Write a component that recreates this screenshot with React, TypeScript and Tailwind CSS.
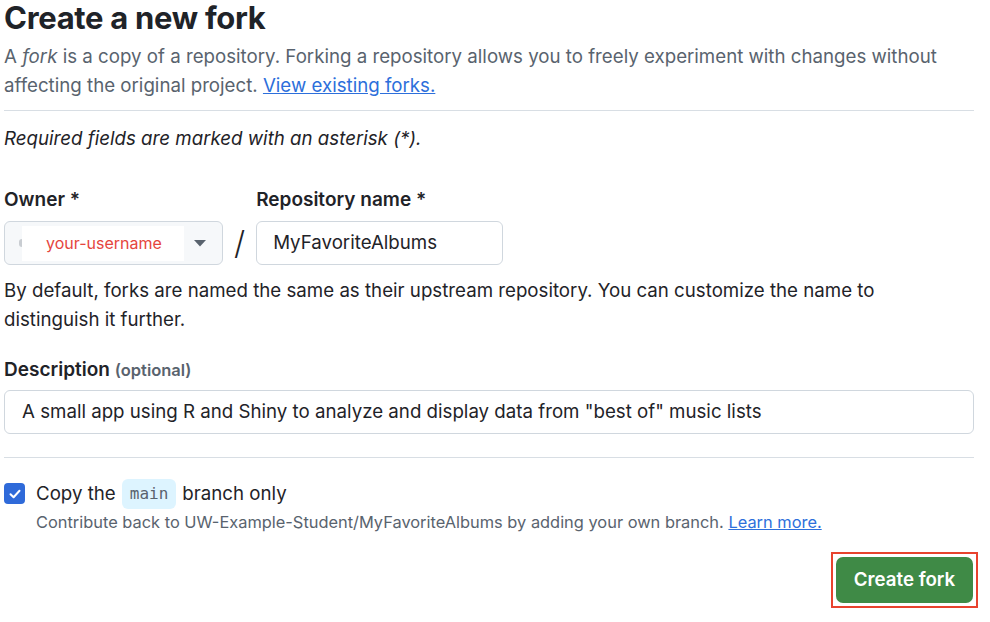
import React from "react";

export default function App() {
  return (
    <div
      className="w-[990px] h-[622px] bg-white pl-[4px] pr-[16px] overflow-hidden text-[#1f2328]"
      style={{ fontFamily: 'Inter, "Liberation Sans", Arial, sans-serif' }}
    >
      <h1 className="text-[31px] leading-[36px] font-bold tracking-[-0.3px]">Create a new fork</h1>
      <p className="mt-[6px] text-[18.7px] leading-[29px] text-[#59636e]">
        A <em>fork</em> is a copy of a repository. Forking a repository allows you to freely experiment with changes without
        <br />
        affecting the original project.{" "}
        <a href="#" className="text-[#2d6fdb] underline">View existing forks.</a>
      </p>
      <div className="mt-[10px] border-t border-[#d8dee4]" />
      <p className="mt-[13px] text-[18.7px] leading-[29px] italic">Required fields are marked with an asterisk (*).</p>

      <div className="mt-[35px] flex items-end">
        <div className="flex flex-col">
          <label className="text-[19px] leading-[24px] font-semibold">Owner *</label>
          <div className="mt-[9px] w-[219px] h-[44px] rounded-[6px] border border-[#d0d7de] bg-[#f6f8fa] flex items-center relative">
            <div className="ml-[14px] w-[3px] h-[8px] rounded-l-full bg-[#c9cdd2]" />
            <div className="w-[162px] h-[35px] bg-white flex items-center">
              <span className="ml-[24px] text-[16px] text-[#e5453d]">your-username</span>
            </div>
            <svg className="ml-[10px]" width="12" height="7" viewBox="0 0 12 7">
              <path d="M0 0 L12 0 L6 6.5 Z" fill="#59636e" />
            </svg>
          </div>
        </div>
        <span className="mx-[11px] mb-[4px] text-[32px] leading-[36px] font-light text-[#1f2328]">/</span>
        <div className="flex flex-col">
          <label className="text-[19px] leading-[24px] font-semibold">Repository name *</label>
          <div className="mt-[9px] w-[247px] h-[44px] rounded-[6px] border border-[#d0d7de] bg-white flex items-center">
            <span className="ml-[16px] text-[18.7px]">MyFavoriteAlbums</span>
          </div>
        </div>
      </div>

      <p className="mt-[11px] text-[18.7px] leading-[29px]">
        By default, forks are named the same as their upstream repository. You can customize the name to
        <br />
        distinguish it further.
      </p>

      <label className="block mt-[24px] text-[19px] leading-[24px] font-semibold">
        Description <span className="text-[16.5px] text-[#59636e]">(optional)</span>
      </label>
      <div className="mt-[8px] h-[44px] rounded-[6px] border border-[#d0d7de] bg-white flex items-center">
        <span className="ml-[17px] text-[18.7px]">
          A small app using R and Shiny to analyze and display data from "best of" music lists
        </span>
      </div>

      <div className="mt-[23px] border-t border-[#d8dee4]" />

      <div className="mt-[21px] flex items-center h-[29px]">
        <div className="w-[21px] h-[21px] rounded-[4px] bg-[#2f6ad9] flex items-center justify-center">
          <svg width="14" height="14" viewBox="0 0 14 14">
            <path d="M2.5 7.2 L5.6 10.2 L11.5 3.8" fill="none" stroke="white" strokeWidth="2" strokeLinecap="round" strokeLinejoin="round" />
          </svg>
        </div>
        <span className="ml-[11px] text-[18.7px] leading-[29px]">Copy the</span>
        <span
          className="ml-[6px] h-[30px] px-[8px] rounded-[6px] bg-[#ddf4ff] text-[#59636e] text-[16px] flex items-center"
          style={{ fontFamily: '"DejaVu Sans Mono", "Liberation Mono", monospace' }}
        >
          main
        </span>
        <span className="ml-[6px] text-[18.7px] leading-[29px]">branch only</span>
      </div>
      <p className="mt-[2px] ml-[32px] text-[16.4px] leading-[24px] text-[#59636e]">
        Contribute back to UW-Example-Student/MyFavoriteAlbums by adding your own branch.{" "}
        <a href="#" className="text-[#2d6fdb] underline">Learn more.</a>
      </p>

      <div className="mt-[18px] flex justify-end -mr-[4px]">
        <div className="border-2 border-[#e8432e] p-[3px]">
          <button className="w-[137px] h-[46px] rounded-[7px] bg-[#3f8a46] text-white text-[18.7px] font-semibold">
            Create fork
          </button>
        </div>
      </div>
    </div>
  );
}
